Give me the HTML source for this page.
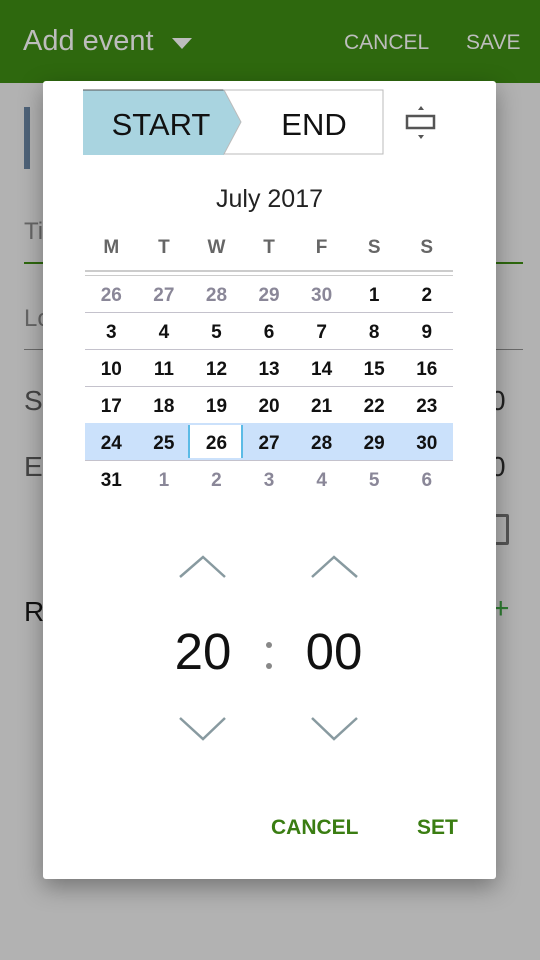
<!DOCTYPE html>
<html><head><meta charset="utf-8"><style>
*{margin:0;padding:0;box-sizing:border-box}
body{width:540px;height:960px;overflow:hidden;background:#b2b2b2;position:relative;font-family:"Liberation Sans",sans-serif}
.a{position:absolute}
.bar{left:0;top:0;width:540px;height:83px;background:#2e680e}
.dlg{left:43px;top:81px;width:453px;height:798px;background:#fff;border-radius:3px;box-shadow:0 8px 24px rgba(0,0,0,.35)}
.row{position:absolute;left:85px;width:368px;height:37px;display:flex}
.row span{flex:1;text-align:center;line-height:37px;font-size:19px;font-weight:bold;color:#111}
.row span.g{color:#8a8798}
.ln{position:absolute;left:85px;width:368px;height:1px;background:#c4c2cc}
</style></head><body>
<div class="a bar"></div>
<div class="a" style="left:23px;top:25px;font-size:29px;color:#bdbdbd">Add event</div>
<div class="a" style="left:172px;top:38px;width:0;height:0;border-left:10px solid transparent;border-right:10px solid transparent;border-top:11px solid #bdbdbd"></div>
<div class="a" style="left:344px;top:31px;font-size:21px;color:#bdbdbd">CANCEL</div>
<div class="a" style="left:466px;top:31px;font-size:21px;color:#bdbdbd">SAVE</div>
<!-- background form -->
<div class="a" style="left:24px;top:107px;width:6px;height:62px;background:#4e6278"></div>
<div class="a" style="left:24px;top:218px;font-size:24px;color:#666">Ti</div>
<div class="a" style="left:24px;top:262px;width:499px;height:2px;background:#2e680e"></div>
<div class="a" style="left:24px;top:305px;font-size:24px;color:#666">Lo</div>
<div class="a" style="left:24px;top:349px;width:499px;height:1px;background:#6a6a6a"></div>
<div class="a" style="left:24px;top:385px;font-size:28px;color:#444">S</div>
<div class="a" style="left:24px;top:451px;font-size:28px;color:#444">E</div>
<div class="a" style="left:490px;top:385px;font-size:28px;color:#222">0</div>
<div class="a" style="left:490px;top:451px;font-size:28px;color:#222">0</div>
<div class="a" style="left:488px;top:514px;width:21px;height:31px;border:3px solid #555;border-radius:2px"></div>
<div class="a" style="left:24px;top:596px;font-size:28px;color:#111">R</div>
<div class="a" style="left:492px;top:592px;font-size:30px;color:#2e7d32">+</div>

<div class="a dlg"></div>
<!-- toggle -->
<svg class="a" style="left:82px;top:89px" width="303" height="68">
<polygon points="1,1 142,1 159,33 142,66 1,66" fill="#a9d4e0"/>
<line x1="1" y1="1" x2="142" y2="1" stroke="#555" stroke-width="1"/>
<polygon points="142,1 301,1 301,65 142,65 159,33" fill="#fff" stroke="#bbb"/>
<text x="79" y="46" font-family="Liberation Sans" font-size="31" text-anchor="middle" fill="#111">START</text>
<text x="232" y="46" font-family="Liberation Sans" font-size="31" text-anchor="middle" fill="#111">END</text>
</svg>
<svg class="a" style="left:404px;top:104px" width="34" height="38">
<rect x="3" y="12" width="27" height="12" fill="none" stroke="#555" stroke-width="2.5"/>
<polygon points="14,6 20,6 17,2" fill="#555"/><polygon points="14,31 20,31 17,35" fill="#555"/>
</svg>
<div class="a" style="left:43px;top:185px;width:453px;text-align:center;font-size:25px;color:#222">July 2017</div>
<div class="row" style="top:229px"><span style="color:#666">M</span><span style="color:#666">T</span><span style="color:#666">W</span><span style="color:#666">T</span><span style="color:#666">F</span><span style="color:#666">S</span><span style="color:#666">S</span></div>
<div class="ln" style="top:270px;height:2px;background:#ccc"></div>
<div class="ln" style="top:275px;background:#ccc"></div>
<div class="row" style="top:277px"><span class="g">26</span><span class="g">27</span><span class="g">28</span><span class="g">29</span><span class="g">30</span><span>1</span><span>2</span></div>
<div class="ln" style="top:312px"></div>
<div class="row" style="top:314px"><span>3</span><span>4</span><span>5</span><span>6</span><span>7</span><span>8</span><span>9</span></div>
<div class="ln" style="top:349px"></div>
<div class="row" style="top:351px"><span>10</span><span>11</span><span>12</span><span>13</span><span>14</span><span>15</span><span>16</span></div>
<div class="ln" style="top:386px"></div>
<div class="row" style="top:388px"><span>17</span><span>18</span><span>19</span><span>20</span><span>21</span><span>22</span><span>23</span></div>
<div class="a" style="left:85px;top:423px;width:368px;height:37px;background:#cbe1fb"></div>
<div class="a" style="left:188px;top:425px;width:55px;height:33px;background:#fff;border-left:2px solid #5bbbe6;border-right:2px solid #5bbbe6"></div>
<div class="row" style="top:425px"><span>24</span><span>25</span><span>26</span><span>27</span><span>28</span><span>29</span><span>30</span></div>
<div class="ln" style="top:460px"></div>
<div class="row" style="top:462px"><span>31</span><span class="g">1</span><span class="g">2</span><span class="g">3</span><span class="g">4</span><span class="g">5</span><span class="g">6</span></div>
<!-- time -->
<svg class="a" style="left:170px;top:550px" width="200" height="200" fill="none" stroke="#889aa0" stroke-width="2.5">
<polyline points="10,27 33,7 55,27"/><polyline points="142,27 164,7 187,27"/>
<polyline points="10,168 33,189 55,168"/><polyline points="142,168 164,189 187,168"/>
</svg>
<div class="a" style="left:153px;top:622px;width:100px;text-align:center;font-size:51px;color:#111">20</div>
<div class="a" style="left:284px;top:622px;width:100px;text-align:center;font-size:51px;color:#111">00</div>
<div class="a" style="left:266px;top:642px;width:6px;height:6px;border-radius:50%;background:#888"></div>
<div class="a" style="left:266px;top:663px;width:6px;height:6px;border-radius:50%;background:#888"></div>
<div class="a" style="left:271px;top:816px;font-size:21px;font-weight:bold;color:#3a7d12">CANCEL</div>
<div class="a" style="left:417px;top:816px;font-size:21px;font-weight:bold;color:#3a7d12">SET</div>
</body></html>
